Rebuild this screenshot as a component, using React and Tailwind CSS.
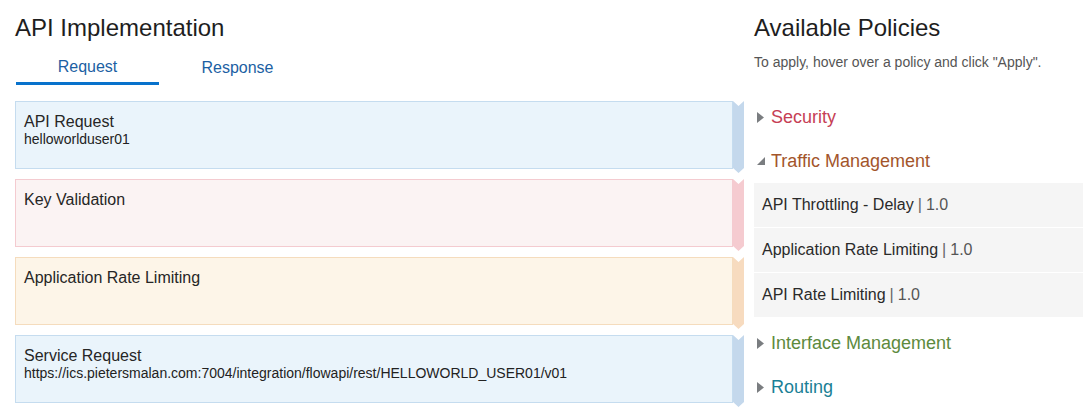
import React from "react";

const cards = [
  {
    title: "API Request",
    sub: "helloworlduser01",
    box: "bg-[#eaf4fb] border-[#c5dcef]",
    strip: "bg-[#c4d8ec]",
  },
  {
    title: "Key Validation",
    box: "bg-[#fbf3f3] border-[#f4cbd0]",
    strip: "bg-[#f5cbd0]",
  },
  {
    title: "Application Rate Limiting",
    box: "bg-[#fdf5e8] border-[#f5dcbd]",
    strip: "bg-[#f7dbbf]",
  },
  {
    title: "Service Request",
    sub: "https://ics.pietersmalan.com:7004/integration/flowapi/rest/HELLOWORLD_USER01/v01",
    box: "bg-[#eaf4fb] border-[#c5dcef]",
    strip: "bg-[#c4d8ec]",
  },
];

const trafficPolicies = ["API Throttling - Delay", "Application Rate Limiting", "API Rate Limiting"];

function Collapsed() {
  return (
    <svg width="8" height="11" viewBox="0 0 8 11" className="shrink-0">
      <polygon points="0,0 7,5.5 0,11" fill="#7a7d80" />
    </svg>
  );
}

function Expanded() {
  return (
    <svg width="8" height="9" viewBox="0 0 8 9" className="shrink-0">
      <polygon points="8,0 8,8 0,8" fill="#7a7d80" />
    </svg>
  );
}

function Category({ label, color, open }) {
  return (
    <div className="h-[44px] flex items-center pl-[3px] gap-[6px]">
      {open ? <Expanded /> : <Collapsed />}
      <span className={`text-[18px] ${color}`}>{label}</span>
    </div>
  );
}

export default function App() {
  return (
    <div className="flex w-[1083px] h-[415px] bg-white text-[#222] overflow-hidden font-['Liberation_Sans',Arial,sans-serif]">
      <div className="w-[744px] pl-[15px] pt-[13px] shrink-0">
        <h1 className="text-[24px] leading-[30px] text-[#1e1e1e]">API Implementation</h1>
        <div className="flex mt-[8px] ml-[1px]">
          <div className="w-[143px] h-[34px] flex items-center justify-center text-[16px] text-[#1c5fa3] border-b-[3px] border-[#0872cc]">
            Request
          </div>
          <div className="w-[157px] h-[34px] flex items-center justify-center text-[16px] text-[#1c5fa3]">
            Response
          </div>
        </div>
        <div className="mt-[16px] flex flex-col gap-[6px]">
          {cards.map((c) => (
            <div key={c.title} className="flex h-[72px]">
              <div className={`flex-1 h-[68px] border px-[8px] pt-[11px] ${c.box}`}>
                <div className="text-[16px] leading-[18px] text-[#262626]">{c.title}</div>
                {c.sub && <div className="text-[14px] leading-[16px] text-[#222]">{c.sub}</div>}
              </div>
              <div
                className={`w-[11px] h-[72px] [clip-path:polygon(0_0,50%_5px,100%_0,100%_calc(100%-5px),50%_100%,0_calc(100%-5px))] ${c.strip}`}
              />
            </div>
          ))}
        </div>
      </div>
      <div className="flex-1 ml-[10px] pt-[13px]">
        <h2 className="text-[24px] leading-[30px] text-[#1e1e1e]">Available Policies</h2>
        <p className="text-[14px] leading-[21px] mt-[9px] text-[#555]">To apply, hover over a policy and click "Apply".</p>
        <div className="mt-[22px]">
          <Category label="Security" color="text-[#c63e55]" />
          <Category label="Traffic Management" color="text-[#a3552b]" open />
          <div className="flex flex-col gap-[1px] bg-white">
            {trafficPolicies.map((p) => (
              <div key={p} className="h-[44px] bg-[#f5f5f5] flex items-center pl-[8px] text-[16px] text-[#2a2a2a]">
                {p}
                <span className="ml-[4px] text-[#666]">|</span>
                <span className="ml-[4px] text-[#555]">1.0</span>
              </div>
            ))}
          </div>
          <div className="h-[4px]" />
          <Category label="Interface Management" color="text-[#5d8a3d]" />
          <Category label="Routing" color="text-[#1b7f96]" />
        </div>
      </div>
    </div>
  );
}
